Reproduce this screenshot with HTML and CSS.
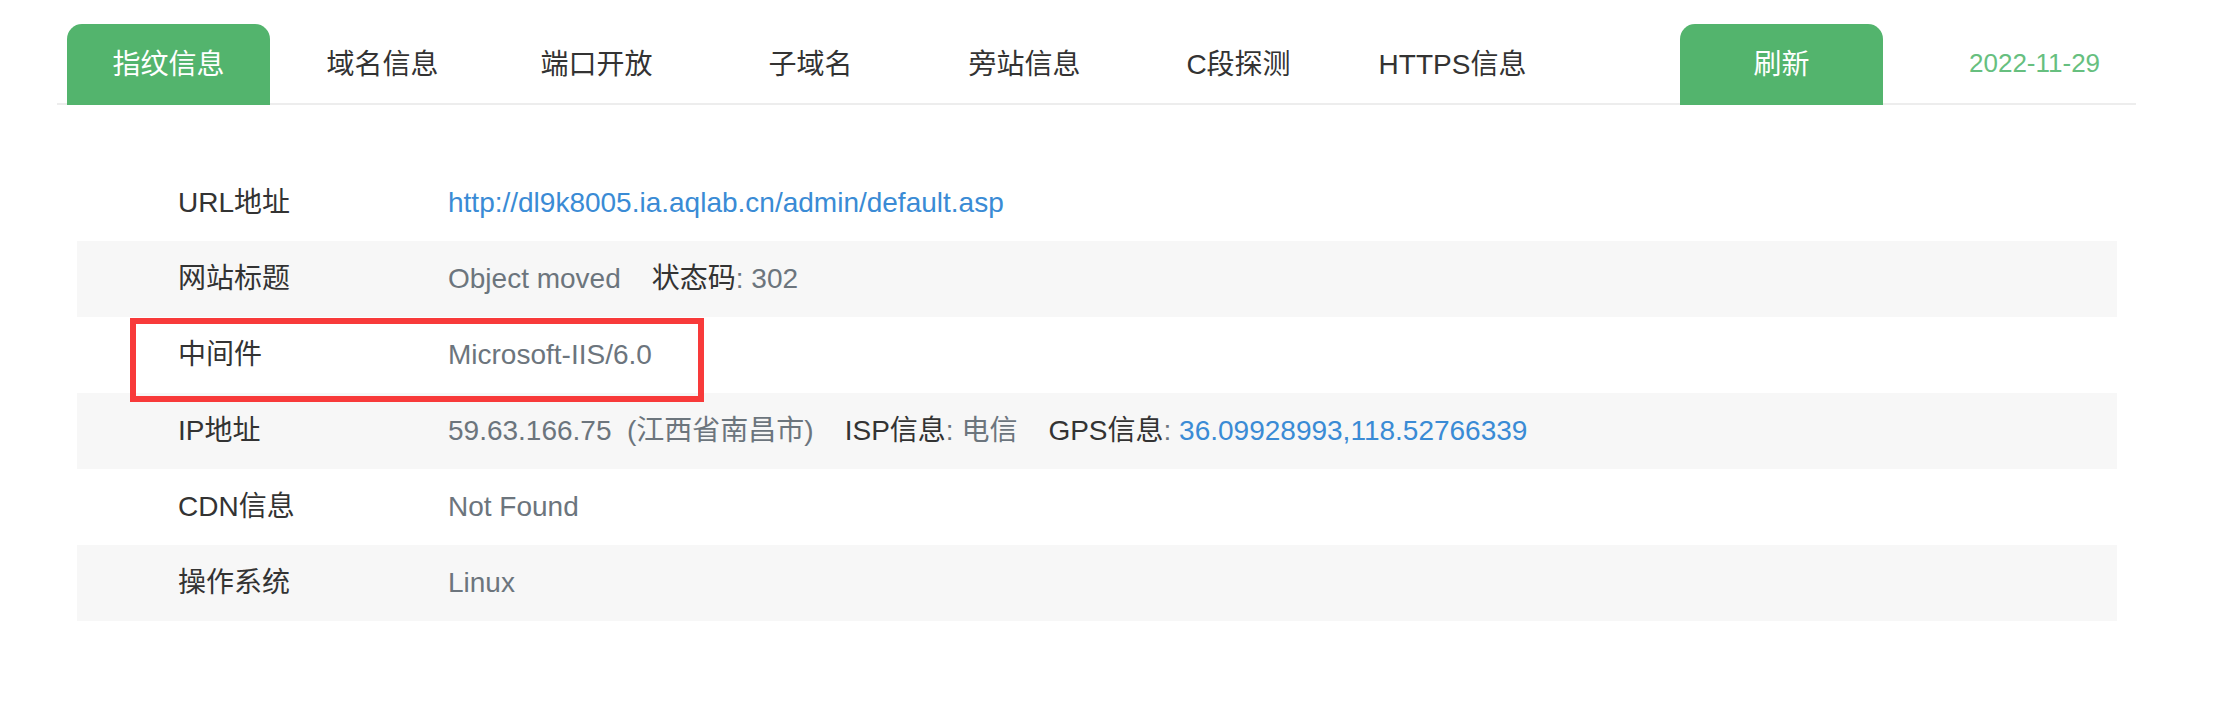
FILE: index.html
```html
<!DOCTYPE html>
<html lang="zh-CN">
<head>
<meta charset="utf-8">
<title>指纹信息</title>
<link rel="stylesheet" href="styles.css">
</head>
<body>
<div class="page">
  <nav class="tabs">
    <a class="tab active">指纹信息</a>
    <a class="tab">域名信息</a>
    <a class="tab">端口开放</a>
    <a class="tab">子域名</a>
    <a class="tab">旁站信息</a>
    <a class="tab">C段探测</a>
    <a class="tab">HTTPS信息</a>
    <a class="tab refresh">刷新</a>
    <span class="date">2022-11-29</span>
  </nav>

  <div class="info">
    <div class="row">
      <div class="label">URL地址</div>
      <div class="value"><a class="link">http://dl9k8005.ia.aqlab.cn/admin/default.asp</a></div>
    </div>
    <div class="row alt">
      <div class="label">网站标题</div>
      <div class="value">Object moved<span class="sep"><span class="key">状态码</span>: 302</span></div>
    </div>
    <div class="row">
      <div class="label">中间件</div>
      <div class="value">Microsoft-IIS/6.0</div>
    </div>
    <div class="row alt">
      <div class="label">IP地址</div>
      <div class="value">59.63.166.75&nbsp;&nbsp;(江西省南昌市)<span class="sep"><span class="key">ISP信息</span>: 电信</span><span class="sep"><span class="key">GPS信息</span>: <a class="link">36.09928993,118.52766339</a></span></div>
    </div>
    <div class="row">
      <div class="label">CDN信息</div>
      <div class="value">Not Found</div>
    </div>
    <div class="row alt">
      <div class="label">操作系统</div>
      <div class="value">Linux</div>
    </div>
    <div class="highlight"></div>
  </div>
</div>
</body>
</html>
```

FILE: styles.css
```css
* { box-sizing: border-box; }

html, body {
  margin: 0;
  padding: 0;
  background: #ffffff;
}

body {
  font-family: "Liberation Sans", "Noto Sans CJK SC", sans-serif;
  color: #333333;
}

.page {
  padding-top: 24px;
  padding-left: 57px;
}

.tabs {
  display: flex;
  align-items: flex-start;
  gap: 11px;
  width: 2079px;
  height: 81px;
  padding-left: 10px;
  border-bottom: 2px solid #ededed;
}

.tab {
  display: flex;
  align-items: center;
  justify-content: center;
  width: 203px;
  height: 81px;
  flex: none;
  font-size: 28px;
  line-height: 1;
  color: #333333;
  border-radius: 15px 15px 0 0;
  text-decoration: none;
}

.tab.active,
.tab.refresh {
  background: #53b46d;
  color: #ffffff;
}

.tab.refresh {
  margin-left: 115px;
}

.date {
  display: flex;
  align-items: center;
  height: 77px;
  margin-left: 75px;
  font-size: 26px;
  line-height: 1;
  color: #67bf7f;
}

.info {
  position: relative;
  width: 2040px;
  margin-top: 60px;
  margin-left: 20px;
}

.row {
  display: flex;
  align-items: center;
  height: 76px;
  padding-left: 101px;
  font-size: 28px;
  line-height: 1;
}

.row.alt {
  background: #f7f7f7;
}

.label {
  width: 270px;
  flex: none;
  color: #333333;
}

.value {
  color: #6c757d;
  white-space: nowrap;
}

.key {
  color: #333333;
}

.link {
  color: #3a8bd5;
  text-decoration: none;
}

.sep {
  margin-left: 31px;
}

.highlight {
  position: absolute;
  left: 53px;
  top: 153px;
  width: 574px;
  height: 84px;
  border: 6px solid #f83a3a;
  pointer-events: none;
}
```
